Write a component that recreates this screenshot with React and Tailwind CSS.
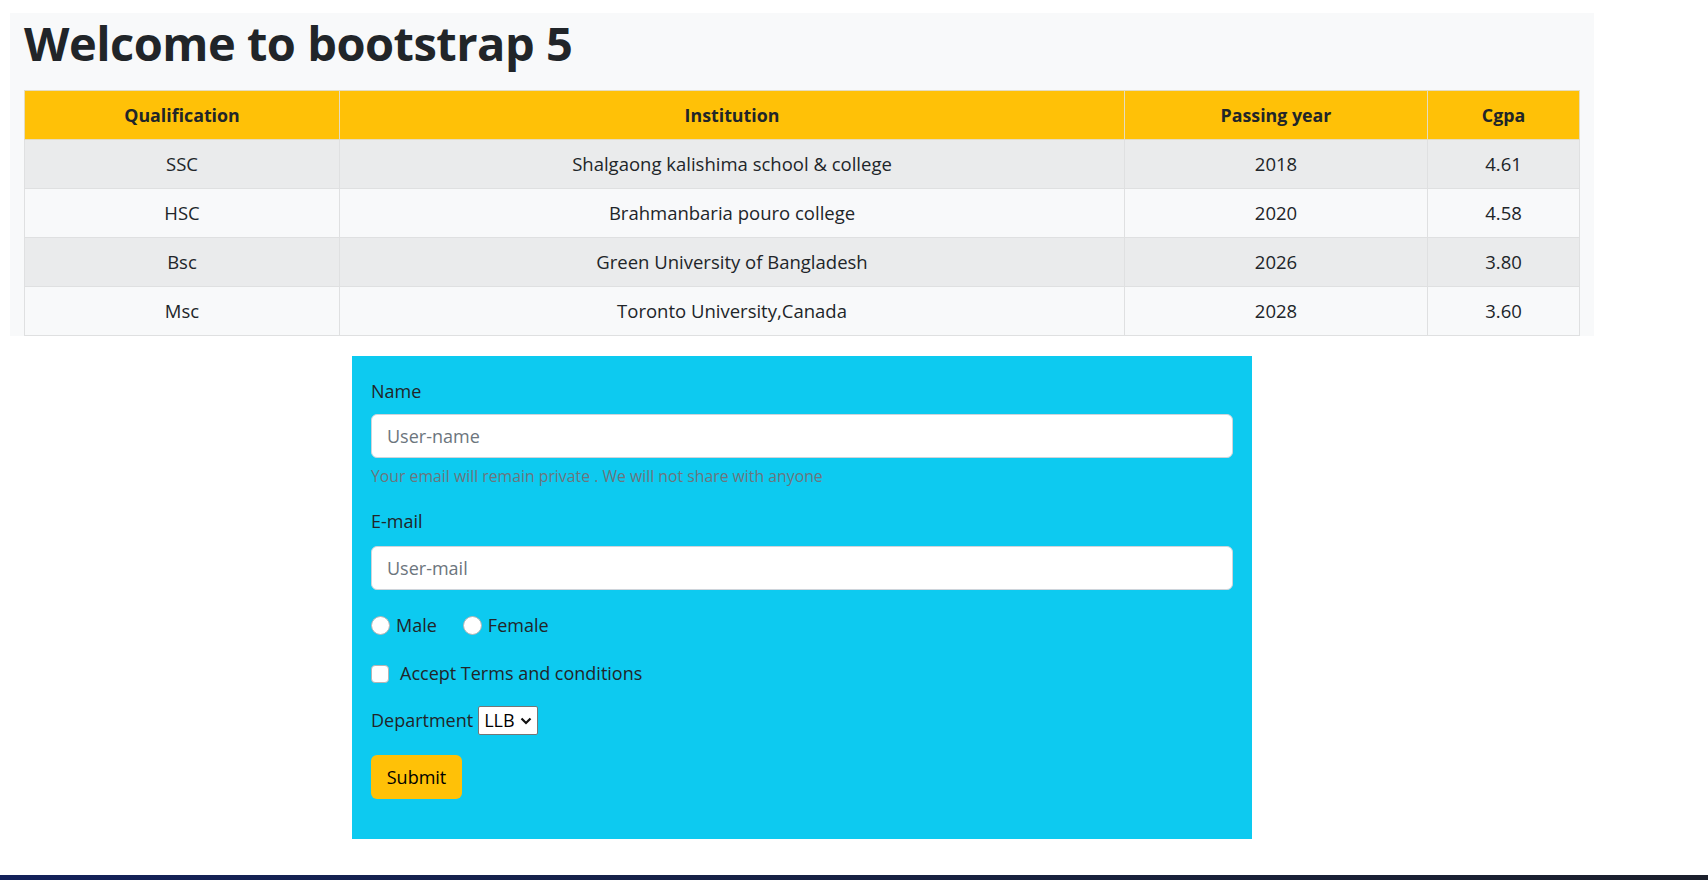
import React from "react";

const rows = [
  ["SSC", "Shalgaong kalishima school & college", "2018", "4.61"],
  ["HSC", "Brahmanbaria pouro college", "2020", "4.58"],
  ["Bsc", "Green University of Bangladesh", "2026", "3.80"],
  ["Msc", "Toronto University,Canada", "2028", "3.60"],
];

function Radio({ label }) {
  return (
    <label className="flex items-center">
      <span className="w-[19px] h-[19px] rounded-full bg-white border border-[#b5b5b5]" />
      <span className="ml-[6px]">{label}</span>
    </label>
  );
}

export default function App() {
  return (
    <div
      className="h-[880px] flex flex-col bg-white text-[#212529]"
      style={{ fontFamily: '"Open Sans", "Noto Sans", sans-serif' }}
    >
      <div className="pl-[10px] pt-[13px] w-[1594px]">
        <div className="bg-[#f8f9fa] pl-[14px] pr-[15px] w-[1584px]">
          <h1 className="text-[47px] leading-[60px] font-bold tracking-[-0.5px] mb-[17px]">
            Welcome to bootstrap 5
          </h1>
          <table className="w-[1555px] border-collapse text-[18.5px] table-fixed">
            <colgroup>
              <col className="w-[315px]" />
              <col className="w-[785px]" />
              <col className="w-[303px]" />
              <col className="w-[152px]" />
            </colgroup>
            <thead>
              <tr className="bg-[#ffc107] h-[49px] text-[17.8px]">
                <th className="border border-[#e4dcc0] font-bold">Qualification</th>
                <th className="border border-[#e4dcc0] font-bold">Institution</th>
                <th className="border border-[#e4dcc0] font-bold">Passing year</th>
                <th className="border border-[#e4dcc0] font-bold">Cgpa</th>
              </tr>
            </thead>
            <tbody>
              {rows.map((r, i) => (
                <tr
                  key={i}
                  className={
                    "h-[49px] " + (i % 2 === 0 ? "bg-[#eaebec]" : "bg-[#f8f9fa]")
                  }
                >
                  {r.map((c, j) => (
                    <td key={j} className="border border-[#dfe0e1] text-center">
                      {c}
                    </td>
                  ))}
                </tr>
              ))}
            </tbody>
          </table>
        </div>
        <form className="mx-auto mt-[20px] w-[900px] bg-[#0dcaf0] px-[19px] pt-[22px] pb-[40px] text-[18px]">
          <div className="leading-[27px]">Name</div>
          <div className="mt-[9px] h-[44px] bg-white rounded-[6px] border border-[#ced4da] flex items-center pl-[15px] text-[#6c757d]">
            User-name
          </div>
          <div className="mt-[7px] text-[15.8px] leading-[23px] text-[#6c757d]">
            Your email will remain private . We will not share with anyone
          </div>
          <div className="mt-[20px] leading-[27px]">E-mail</div>
          <div className="mt-[11px] h-[44px] bg-white rounded-[6px] border border-[#ced4da] flex items-center pl-[15px] text-[#6c757d]">
            User-mail
          </div>
          <div className="mt-[22px] flex items-center gap-[26px] leading-[27px]">
            <Radio label="Male" />
            <Radio label="Female" />
          </div>
          <label className="mt-[21px] flex items-center leading-[27px]">
            <span className="w-[18px] h-[18px] rounded-[4px] bg-white border border-[#b5b5b5]" />
            <span className="ml-[11px]">Accept Terms and conditions</span>
          </label>
          <div className="mt-[19px] flex items-center leading-[27px]">
            <span>Department</span>
            <div className="ml-[5px] h-[29px] w-[60px] bg-white border border-[#767676] rounded-[2px] flex items-center pl-[5px] text-black">
              <span>LLB</span>
              <svg className="ml-auto mr-[5px]" width="12" height="8" viewBox="0 0 12 8" fill="none">
                <path d="M1.5 1.5l4.5 4.5 4.5-4.5" stroke="#111" strokeWidth="2.2" />
              </svg>
            </div>
          </div>
          <button
            type="button"
            className="mt-[20px] h-[44px] w-[91px] bg-[#ffc107] rounded-[6px] text-black text-[18px] flex items-center justify-center"
          >
            Submit
          </button>
        </form>
      </div>
      <div className="mt-auto h-[5px] bg-gradient-to-r from-[#13215a] to-[#1b1f2c]" />
    </div>
  );
}
